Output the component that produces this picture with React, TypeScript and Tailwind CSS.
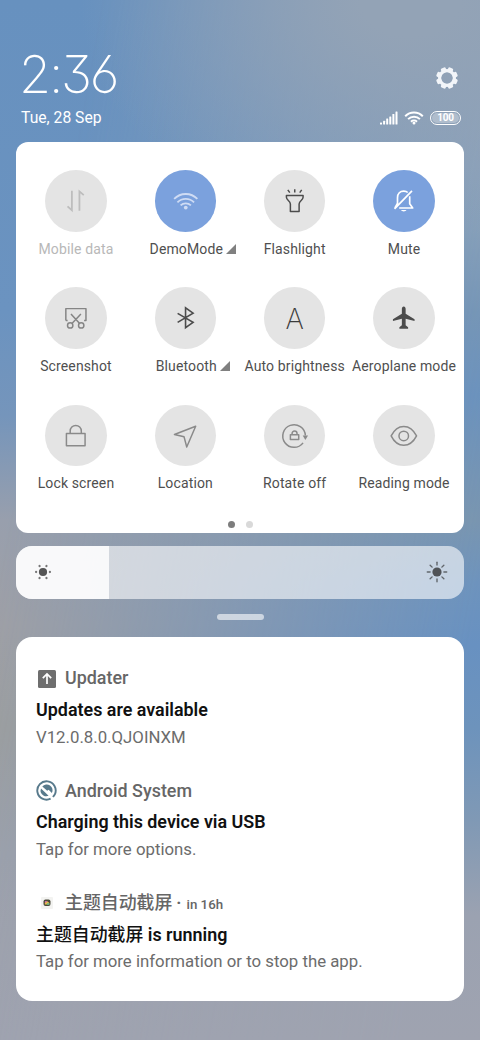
import type { ReactNode } from "react";

type Tile = {
  label: string;
  icon: ReactNode;
  active?: boolean;
  disabled?: boolean;
  expandable?: boolean;
};

/** Tile icons are drawn around the centre of the circle **/
const Glyph = ({ className, children }: { className: string; children: ReactNode }) => (
  <svg
    viewBox="-31 -31 62 62"
    className={`size-full ${className}`}
    fill="none"
    stroke="currentColor"
    strokeWidth="1.5"
    strokeLinejoin="round"
  >
    {children}
  </svg>
);

const tiles: Tile[] = [
  {
    label: "Mobile data",
    disabled: true,
    icon: (
      <Glyph className="text-[#bdbdbd]">
        <path d="M-8.3 5.6L-3.9 9.6V-10M3.7 10V-9.4L8.1-5.6" strokeWidth="1.8" strokeLinejoin="miter" />
      </Glyph>
    ),
  },
  {
    label: "DemoMode",
    active: true,
    expandable: true,
    icon: (
      <Glyph className="text-[#cfdcf4]">
        <path d="M-11.7-1.8A16.2 16.2 0 0 1 11.7-1.8M-8.4 1.7A11.6 11.6 0 0 1 8.4 1.7M-5.2 4.7A7.4 7.4 0 0 1 5.2 4.7" strokeWidth="1.8" />
        <circle cy="6.9" r="1.9" fill="currentColor" stroke="none" />
      </Glyph>
    ),
  },
  {
    label: "Flashlight",
    icon: (
      <Glyph className="text-[#4c4c4c]">
        <path d="M-8.4-5.2H8.4V-3.6C8.4-.6 4.6 0 4.4 3.2V10.8H-4.4V3.2C-4.6 0-8.4-.6-8.4-3.6ZM-7-11L-5-8.2M0-11.7V-8.2M7-11L5-8.2" />
      </Glyph>
    ),
  },
  {
    label: "Mute",
    active: true,
    icon: (
      <Glyph className="text-white">
        <path d="M-6.3 3.4V-3C-6.3-7.2-3.6-9.7 0-9.7C1.8-9.7 3-9.3 4-8.3M6-4.5V3L9 7.3H-4.6M-9.3 8.2L8.3-10M-6.5 3L-8.9 7.2" strokeWidth="1.7" />
        <path d="M-2.8 9.4H2.8C2 11.2-2 11.2-2.8 9.4Z" fill="currentColor" stroke="none" />
      </Glyph>
    ),
  },
  {
    label: "Screenshot",
    icon: (
      <Glyph className="text-[#858585]">
        <path d="M-10 2.7V-9.2H10.3V2.7H8.4M-10 2.7H-8.2M-4.8-3.8L3.7 5.5M5.2-3.8L-3.6 5.5" />
        <circle cx="-5.6" cy="7.7" r="2.7" />
        <circle cx="5.5" cy="7.7" r="2.7" />
      </Glyph>
    ),
  },
  {
    label: "Bluetooth",
    expandable: true,
    icon: (
      <Glyph className="text-[#4c4c4c]">
        <path d="M-8.2-4.4L7.4 4.7L-.2 10V-10L7.4-4.7L-8.2 4.6" strokeLinejoin="miter" strokeWidth="1.6" />
      </Glyph>
    ),
  },
  {
    label: "Auto brightness",
    icon: (
      <span className="pt-px font-['Inter'] text-[28px] font-extralight leading-none text-[#3c3c3c]">A</span>
    ),
  },
  {
    label: "Aeroplane mode",
    icon: (
      <Glyph className="text-[#4c4c4c]">
        <path
          d="M0-11.4C1.2-11.4 1.9-10.5 1.9-9V-4L10.9 1.6V3.4L1.9 1V7.5L4.4 9.5V11H-4.4V9.5L-1.9 7.5V1L-10.9 3.4V1.6L-1.9-4V-9C-1.9-10.5-1.2-11.4 0-11.4Z"
          fill="currentColor"
          stroke="none"
        />
      </Glyph>
    ),
  },
  {
    label: "Lock screen",
    icon: (
      <Glyph className="text-[#8a8a8a]">
        <path d="M-9.4-2.2H9.4V10.2H-9.4ZM-5.6-2.2V-4.8A5.6 5.6 0 0 1 5.6-4.8V-2.2" />
      </Glyph>
    ),
  },
  {
    label: "Location",
    icon: (
      <Glyph className="text-[#8a8a8a]">
        <path d="M10-9.6L-11.4-1.3L-1.7 1.1L1 11.4Z" />
      </Glyph>
    ),
  },
  {
    label: "Rotate off",
    icon: (
      <Glyph className="text-[#8a8a8a]">
        <path d="M10.7-.3A11.4 11.4 0 1 0 8.4 7.2M-4.4-1H4V3.9H-4.4ZM-2.7-1V-2.2A2.5 2.5 0 0 1 2.3-2.2V-1" />
        <path d="M8-.3H13.4L10.7 4.3Z" fill="currentColor" stroke="none" />
      </Glyph>
    ),
  },
  {
    label: "Reading mode",
    icon: (
      <Glyph className="text-[#8a8a8a]">
        <path d="M-12.7 .2C-6.5-12.6 6.5-12.6 12.9 .2C6.5 12.8-6.5 12.8-12.7 .2Z" />
        <circle cy=".2" r="4.8" />
      </Glyph>
    ),
  },
];

const QuickTile = ({ tile }: { tile: Tile }) => (
  <div className="flex h-[117.3px] flex-col items-center">
    <div
      className={`flex size-[61.5px] items-center justify-center rounded-full ${
        tile.active ? "bg-[#7ba1dd]" : "bg-[#e4e4e4]"
      }`}
    >
      {tile.icon}
    </div>
    <div
      className={`mt-[7.3px] flex items-center gap-[3px] whitespace-nowrap text-[14px] leading-5 tracking-[0.13px] ${
        tile.disabled ? "text-[#b8b8b8]" : "text-[#4f4f4f]"
      } ${tile.expandable ? "pl-[15px]" : ""}`}
    >
      {tile.label}
      {tile.expandable && (
        <svg viewBox="0 0 10 10" className="size-2.5">
          <path d="M10 0V10H0Z" fill="#808080" />
        </svg>
      )}
    </div>
  </div>
);

const StatusIcons = () => (
  <div className="flex items-center">
    <svg viewBox="0 0 18 14" className="h-[14px] w-[18px]" fill="#fff">
      <rect x="0" y="11.6" width="2" height="1.8" rx=".5" />
      <rect x="3.1" y="9.8" width="2" height="3.6" rx=".5" />
      <rect x="6.2" y="7.6" width="2" height="5.8" rx=".5" />
      <rect x="9.3" y="5.4" width="2" height="8" rx=".5" />
      <rect x="12.4" y="3" width="2" height="10.4" rx=".5" />
      <rect x="15.5" y=".5" width="2" height="12.9" rx=".5" />
    </svg>
    <svg viewBox="0 0 20 14" className="ml-1.5 h-[14px] w-5" fill="none" stroke="#fff" strokeWidth="2">
      <path d="M1.2 5.2A12.5 12.5 0 0 1 18.8 5.2M4.1 8.1A8.4 8.4 0 0 1 15.9 8.1M7 10.7A4.4 4.4 0 0 1 13 10.7" />
      <circle cx="10" cy="12.1" r="1.5" fill="#fff" stroke="none" />
    </svg>
    <div className="ml-1.5 flex h-[14px] w-[31px] rounded-full border-[1.4px] border-white p-px">
      <div className="flex flex-1 items-center justify-center rounded-full bg-white/30 text-[10px] font-bold leading-none tracking-[-0.3px] text-white">
        100
      </div>
    </div>
  </div>
);

const teeth = [0, 45, 90, 135, 180, 225, 270, 315];

const Header = () => (
  <header className="flex h-[142px] justify-between pl-[21px] pr-[19px] text-white">
    <div className="pt-[46px]">
      <div className="-ml-[2px] h-[56px] whitespace-nowrap font-['Inter'] text-[52px] font-[250] leading-[57px] tracking-[-2.2px] [font-feature-settings:'cv09','ss01']">
        2:36
      </div>
      <div className="mt-[6px] text-[15.7px] leading-5">Tue, 28 Sep</div>
    </div>
    <div className="flex flex-col items-end pt-[66px]">
      <svg viewBox="-12 -12 24 24" className="mr-[2px] size-6" fill="#f2f5f9">
        {teeth.map((a) => (
          <rect key={a} x="-2.6" y="-10.9" width="5.2" height="5" rx="1.3" transform={`rotate(${a + 22.5})`} />
        ))}
        <circle r="7.4" fill="none" stroke="#f2f5f9" strokeWidth="3.2" />
      </svg>
      <div className="mt-[21px]">
        <StatusIcons />
      </div>
    </div>
  </header>
);

const rays = [0, 45, 90, 135, 180, 225, 270, 315];
const dots = [0, 60, 120, 180, 240, 300];

const BrightnessSlider = () => (
  <div className="mt-[12.5px] flex h-[53.5px] overflow-hidden rounded-2xl bg-white/60">
    <div className="flex w-[93px] items-center bg-white/85 pl-[17px]">
      <svg viewBox="-10 -10 20 20" className="size-5" fill="#555">
        <circle r="4.1" />
        {dots.map((a) => (
          <circle key={a} cx="6.9" r="1.15" fill="#777" transform={`rotate(${a})`} />
        ))}
      </svg>
    </div>
    <div className="flex flex-1 items-center justify-end pr-[15px]">
      <svg viewBox="-12 -12 24 24" className="size-6" fill="#505357">
        <circle r="4.6" />
        {rays.map((a) => (
          <path key={a} d="M0-9.7V-6.9" stroke="#62676c" strokeWidth="1.4" strokeLinecap="round" transform={`rotate(${a})`} />
        ))}
      </svg>
    </div>
  </div>
);

type NoticeProps = { icon: ReactNode; app: string; time?: string; title: ReactNode; text: string };

const Notice = ({ icon, app, time, title, text }: NoticeProps) => (
  <article className="h-[112.4px]">
    <div className="flex h-6 items-center text-[17.9px] font-medium text-[#666]">
      <div className="mr-2 flex size-[21px] items-center justify-center">{icon}</div>
      {app}
      {time && (
        <span className="ml-1 text-[13.3px]">
          <b className="mr-[5px] text-[17px]">·</b>
          {time}
        </span>
      )}
    </div>
    <h2 className="mt-[7.5px] h-6 text-[17.9px] font-semibold leading-6 text-[#111]">{title}</h2>
    <p className="mt-[2.5px] text-[16.8px] leading-6 text-[#6c6c6c]">{text}</p>
  </article>
);

const Backdrop = () => (
  <div className="absolute inset-0 -z-10 bg-[linear-gradient(180deg,#6791bf_0%,#6b93c0_30%,#7595bb_40%,#989fad_50%,#9fa0a6_60%,#9e9f9f_70%,#9da1ab_82%,#9fa3b0_100%)]">
    <div className="absolute inset-0 bg-[linear-gradient(180deg,#92a2b7_0%,#8fa3b9_16%,#8aa1b8_22%,#7796b5_30%,#6b92bd_38%,#7895b0_50%,#6d93bd_56%,#6891c1_62%,#6d93bc_70%,#8099b5_79%,#9ba2b1_88%,#9fa3b0_100%)] [mask-image:linear-gradient(100deg,transparent_15%,black_88%)]" />
    <div className="absolute inset-x-0 top-0 h-[260px] bg-[radial-gradient(ellipse_330px_240px_at_410px_0px,#93a3b6_15%,transparent)]" />
  </div>
);

const App = () => {
  return (
    <main className="relative isolate h-[1040px] w-[480px] overflow-hidden px-4 font-['Roboto','Noto_Sans_CJK_SC',sans-serif]">
      <Backdrop />
      <div className="-mx-4">
        <Header />
      </div>

      {/** Quick settings **/}
      <section className="h-[391px] rounded-xl bg-white pt-[28px]">
        <div className="mx-[5.3px] grid grid-cols-4">
          {tiles.map((tile) => (
            <QuickTile key={tile.label} tile={tile} />
          ))}
        </div>
        <div className="-mt-px flex justify-center gap-[11px]">
          <i className="size-[7px] rounded-full bg-[#7d7d7d]" />
          <i className="size-[7px] rounded-full bg-[#d9d9d9]" />
        </div>
      </section>

      <BrightnessSlider />
      <div className="mx-auto mt-[14.5px] h-1.5 w-[47px] rounded-full bg-white/60" />

      {/** Notifications **/}
      <section className="mt-[17.5px] h-[363.5px] rounded-2xl bg-white px-5 pt-[29.6px]">
        <Notice
          app="Updater"
          title="Updates are available"
          text="V12.0.8.0.QJOINXM"
          icon={
            <svg viewBox="0 0 18 18" className="size-[18px]">
              <rect width="18" height="18" rx="1.5" fill="#6e6e6e" />
              <path d="M9 14V4.5M4.8 8.2L9 4L13.2 8.2" fill="none" stroke="#fff" strokeWidth="1.7" />
            </svg>
          }
        />
        <Notice
          app="Android System"
          title="Charging this device via USB"
          text="Tap for more options."
          icon={
            <svg viewBox="0 0 21 21" className="size-[21px]" fill="none" stroke="#587a8c">
              <path d="M14.6 18.7A9.2 9.2 0 1 1 18.9 14.2L17 17" strokeWidth="1.9" />
              <path d="M7.4 15.4A5.7 5.7 0 0 1 5 8.6L12.6 15.8A5.7 5.7 0 0 1 7.4 15.4Z" fill="#587a8c" stroke="none" />
              <path d="M6.3 6.6A5.8 5.8 0 0 1 15.9 13L12.6 9.8L11.2 10.8Z" fill="#587a8c" stroke="none" />
            </svg>
          }
        />
        <Notice
          app="主题自动截屏"
          time="in 16h"
          title={
            <>
              <span className="font-medium">主题自动截屏</span> is running
            </>
          }
          text="Tap for more information or to stop the app."
          icon={
            <svg viewBox="0 0 12 12" className="size-3">
              <rect width="12" height="12" rx="1" fill="#f3f3f1" />
              <rect x="2.5" y="2.5" width="7" height="6.5" rx="2" fill="#4b4a3c" />
              <path d="M3.8 5.5L6 4L8.2 5.8V7.6H3.8Z" fill="#e5b94e" />
              <path d="M3.6 4H6L4.8 6Z" fill="#d765b5" />
              <path d="M6 6.2H8.4V7.8H6Z" fill="#64b98a" />
            </svg>
          }
        />
      </section>
    </main>
  );
};

export default App;
